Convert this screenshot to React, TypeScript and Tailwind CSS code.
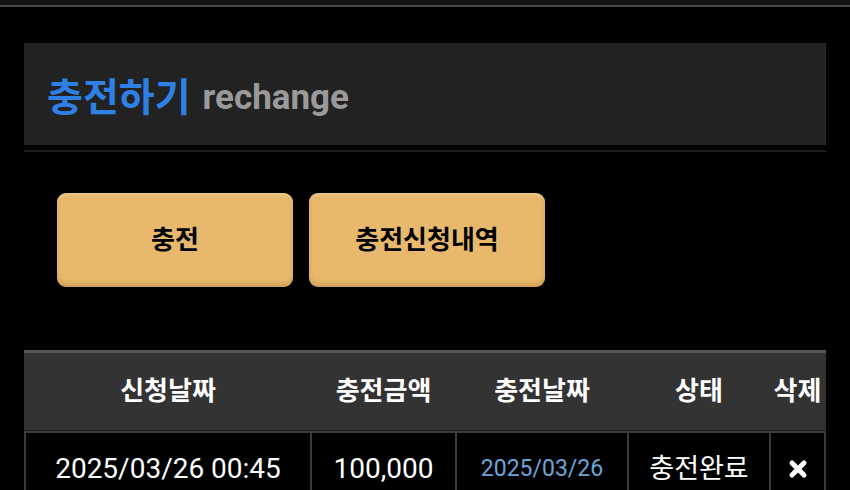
const font = "font-['Roboto','Noto_Sans_CJK_KR',sans-serif]";

const cols = 'grid grid-cols-[284px_143px_170px_140px_53px] gap-[2px]';

function Crossmark() {
  return (
    <svg width="20" height="20" viewBox="0 0 20 20">
      <path d="M4 4 L16 16 M16 4 L4 16" stroke="#fff" strokeWidth="5" strokeLinecap="round" />
    </svg>
  );
}

function ActionButton({ label }: { label: string }) {
  return (
    <button className="flex h-[94px] w-[236px] items-center justify-center rounded-[9px] bg-[#e8b96c] text-[26px] font-bold text-black shadow-[inset_0_-3px_5px_rgba(120,70,10,0.25),inset_0_2px_3px_rgba(255,240,200,0.35),0_2px_3px_rgba(0,0,0,0.6)]">
      {label}
    </button>
  );
}

export default function App() {
  const headers = ['신청날짜', '충전금액', '충전날짜', '상태', '삭제'];
  return (
    <div className={`${font} h-[490px] w-[850px] overflow-hidden bg-black`}>
      <div className="h-[5px] bg-[#141414]" />
      <div className="h-[2px] bg-[#474747]" />

      <div className="mx-6 mt-9">
        <div className="flex h-[102px] items-center border-r border-[#2b2b2b] bg-[#222222] pl-[23px] pt-2">
          <span className="text-[39px] font-bold text-[#2f80e4]">충전하기</span>
          <span className="ml-3 text-[35px] font-bold text-[#9a9a9a]">rechange</span>
        </div>
        <div className="mt-[5px] h-[2px] bg-[#1c1c22]" />

        <div className="mt-[41px] flex gap-4 pl-[33px]">
          <ActionButton label="충전" />
          <ActionButton label="충전신청내역" />
        </div>

        <div className="mt-[63px] border-t-[3px] border-[#555555]">
          <div className={`${cols} h-[77px] items-center bg-[#333333] px-[2px] text-[26px] font-bold text-white`}>
            {headers.map((h) => (
              <div key={h} className="text-center">{h}</div>
            ))}
          </div>
          <div className="h-px bg-[#1a1a1a]" />
          <div className={`${cols} bg-[#3c3c3c] p-[2px] text-white`}>
            <div className="flex h-[72px] items-center justify-center bg-black text-[28px]">2025/03/26 00:45</div>
            <div className="flex h-[72px] items-center justify-center bg-black text-[28px]">100,000</div>
            <div className="flex h-[72px] items-center justify-center bg-black text-[23px] text-[#6aa5d9]">2025/03/26</div>
            <div className="flex h-[72px] items-center justify-center bg-black text-[27px]">충전완료</div>
            <div className="flex h-[72px] items-center justify-center bg-black">
              <Crossmark />
            </div>
          </div>
        </div>
      </div>
    </div>
  );
}
